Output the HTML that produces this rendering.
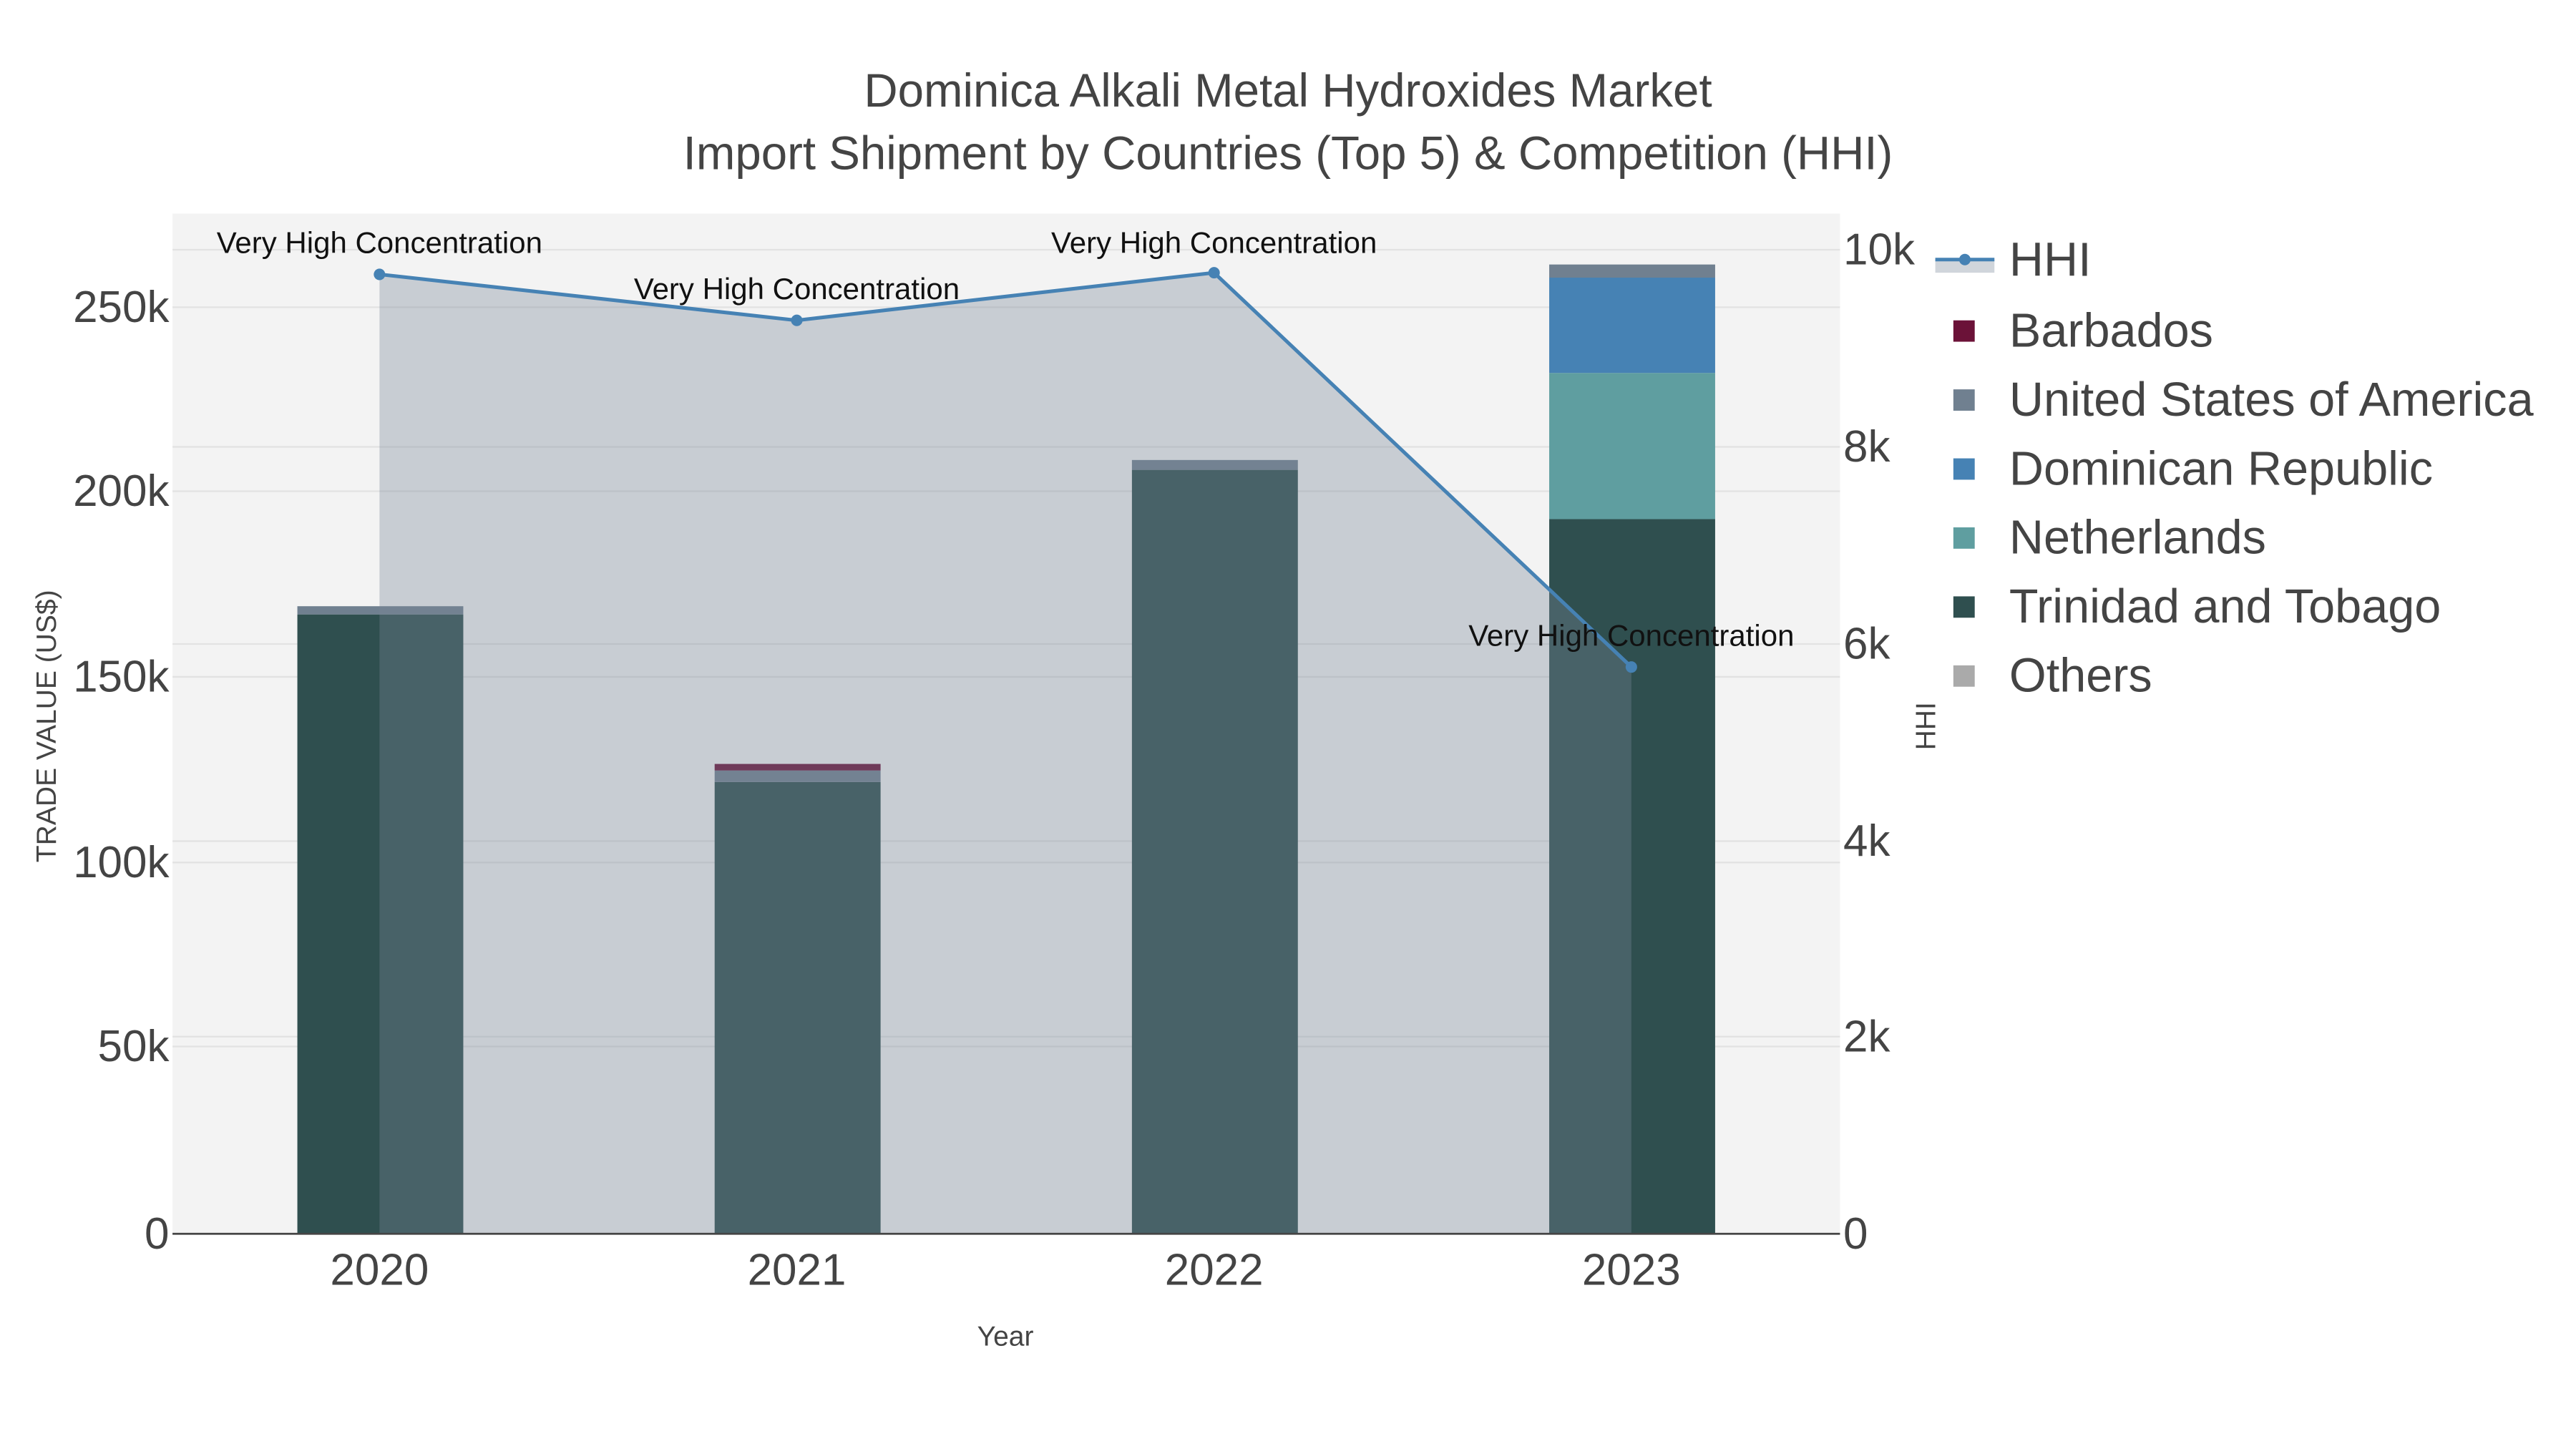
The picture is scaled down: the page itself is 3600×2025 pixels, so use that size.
<!DOCTYPE html>
<html><head><meta charset="utf-8"><style>html,body{margin:0;padding:0;background:#fff}svg{display:block}</style></head>
<body>
<svg width="3600" height="2025" viewBox="0 0 1568 882" xmlns="http://www.w3.org/2000/svg" font-family="Liberation Sans, sans-serif">
<rect width="1568" height="882" fill="#fff"/>
<rect x="105" y="130" width="1015" height="621" fill="#f3f3f3"/>
<g stroke="#e2e2e2" stroke-width="1">
<line x1="105" x2="1120" y1="637" y2="637"/><line x1="105" x2="1120" y1="525" y2="525"/><line x1="105" x2="1120" y1="412" y2="412"/><line x1="105" x2="1120" y1="299" y2="299"/><line x1="105" x2="1120" y1="187" y2="187"/>
<line x1="105" x2="1120" y1="631" y2="631"/><line x1="105" x2="1120" y1="512" y2="512"/><line x1="105" x2="1120" y1="392" y2="392"/><line x1="105" x2="1120" y1="272" y2="272"/><line x1="105" x2="1120" y1="152" y2="152"/>
</g>
<rect x="181" y="374" width="101" height="377" fill="#2f4f4f"/>
<rect x="181" y="369" width="101" height="5" fill="#708090"/>
<rect x="435" y="476" width="101" height="275" fill="#2f4f4f"/>
<rect x="435" y="469" width="101" height="7" fill="#708090"/>
<rect x="435" y="465" width="101" height="4" fill="#6b1238"/>
<rect x="689" y="286" width="101" height="465" fill="#2f4f4f"/>
<rect x="689" y="280" width="101" height="6" fill="#708090"/>
<rect x="943" y="316" width="101" height="435" fill="#2f4f4f"/>
<rect x="943" y="227" width="101" height="89" fill="#5f9ea0"/>
<rect x="943" y="169" width="101" height="58" fill="#4682b4"/>
<rect x="943" y="161" width="101" height="8" fill="#708090"/>
<polygon points="231,167 485,195 739,166 993,406 993,751 231,751" fill="#778899" fill-opacity="0.35"/>
<polyline points="231,167 485,195 739,166 993,406" fill="none" stroke="#4682b4" stroke-width="2.2"/>
<g fill="#4682b4"><circle cx="231" cy="167" r="3.5"/><circle cx="485" cy="195" r="3.5"/><circle cx="739" cy="166" r="3.5"/><circle cx="993" cy="406" r="3.5"/></g>
<line x1="105" x2="1120" y1="751" y2="751" stroke="#444" stroke-width="1.2"/>
<g font-size="18.3" fill="#111" text-anchor="middle">
<text x="231" y="154">Very High Concentration</text><text x="485" y="182">Very High Concentration</text><text x="739" y="154">Very High Concentration</text><text x="993" y="393">Very High Concentration</text>
</g>
<g font-size="27" fill="#444" text-anchor="end">
<text x="103" y="760">0</text><text x="103" y="646">50k</text><text x="103" y="534">100k</text><text x="103" y="421">150k</text><text x="103" y="308">200k</text><text x="103" y="196">250k</text>
</g>
<g font-size="27" fill="#444" text-anchor="start">
<text x="1122" y="760">0</text><text x="1122" y="640">2k</text><text x="1122" y="521">4k</text><text x="1122" y="401">6k</text><text x="1122" y="281">8k</text><text x="1122" y="161">10k</text>
</g>
<g font-size="27" fill="#444" text-anchor="middle">
<text x="231" y="782">2020</text><text x="485" y="782">2021</text><text x="739" y="782">2022</text><text x="993" y="782">2023</text>
</g>
<text x="612" y="819" font-size="17" fill="#444" text-anchor="middle">Year</text>
<text transform="translate(34,442) rotate(-90)" font-size="17" fill="#444" text-anchor="middle">TRADE VALUE (US$)</text>
<text transform="translate(1178,442) rotate(-90)" font-size="17" fill="#444" text-anchor="middle">HHI</text>
<g font-size="28.5" fill="#444" text-anchor="middle">
<text x="784" y="65">Dominica Alkali Metal Hydroxides Market</text>
<text x="784" y="103">Import Shipment by Countries (Top 5) &amp; Competition (HHI)</text>
</g>
<rect x="1178" y="158" width="36" height="8" fill="#778899" fill-opacity="0.35"/>
<line x1="1178" x2="1214" y1="158" y2="158" stroke="#4682b4" stroke-width="2.2"/>
<circle cx="1196" cy="158" r="3.5" fill="#4682b4"/>
<rect x="1189" y="195" width="13" height="13" fill="#6b1238"/>
<rect x="1189" y="237" width="13" height="13" fill="#708090"/>
<rect x="1189" y="279" width="13" height="13" fill="#4682b4"/>
<rect x="1189" y="321" width="13" height="13" fill="#5f9ea0"/>
<rect x="1189" y="363" width="13" height="13" fill="#2f4f4f"/>
<rect x="1189" y="405" width="13" height="13" fill="#aaaaaa"/>
<g font-size="29" fill="#444">
<text x="1223" y="168">HHI</text><text x="1223" y="211">Barbados</text><text x="1223" y="253">United States of America</text><text x="1223" y="295">Dominican Republic</text><text x="1223" y="337">Netherlands</text><text x="1223" y="379">Trinidad and Tobago</text><text x="1223" y="421">Others</text>
</g>
</svg>
</body></html>
